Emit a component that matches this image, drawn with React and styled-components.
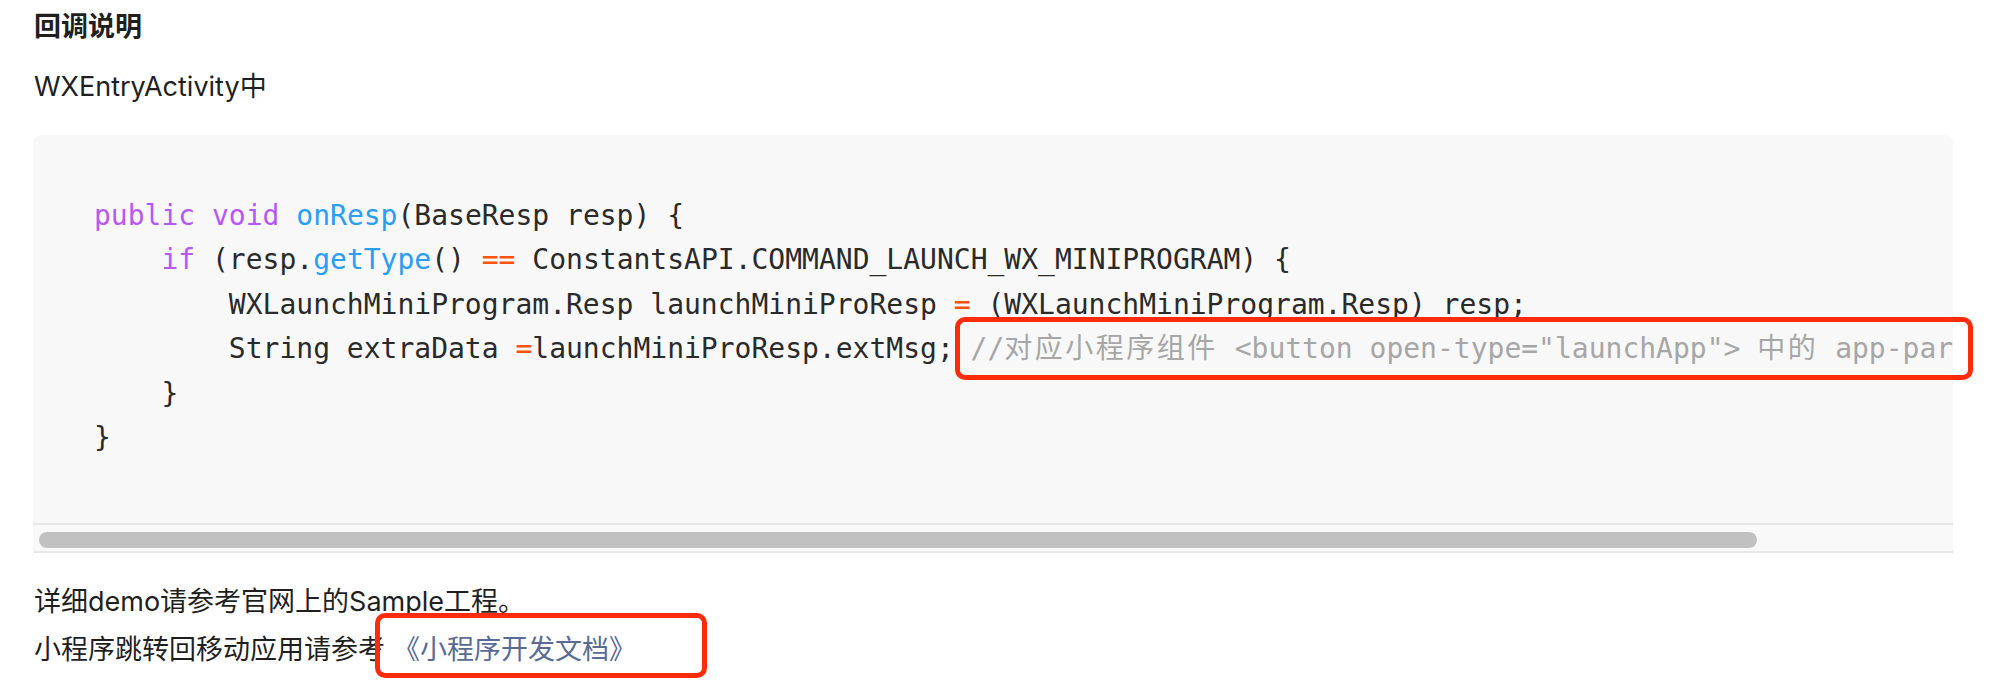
import styled, { createGlobalStyle } from "styled-components";

const GlobalStyle = createGlobalStyle`
  html, body {
    margin: 0;
    padding: 0;
    background: #ffffff;
  }
  * {
    box-sizing: border-box;
  }
`;

const Page = styled.div`
  position: relative;
  padding: 3px 39px 20px 34px;
  font-family: "Inter", "Noto Sans CJK SC", sans-serif;
  color: #1f1f1f;
`;

const Heading = styled.h4`
  margin: 0;
  font-size: 27px;
  line-height: 48px;
  font-weight: 700;
`;

const Para = styled.p`
  margin: ${(p) => p.$top || 0}px 0 0;
  font-size: 27px;
  line-height: ${(p) => p.$lh || 48}px;
`;

const Link = styled.a`
  color: #576b95;
  text-decoration: none;
  margin-left: 8px;
`;

const CodeBox = styled.div`
  margin: 24px 0 0 -1px;
  background: #f8f8f8;
  border-radius: 8px 8px 0 0;
  overflow: hidden;
`;

const Pre = styled.pre`
  margin: 0;
  padding: 14px 0 18px 61px;
  font-family: "DejaVu Sans Mono", "Noto Sans CJK SC", monospace;
  font-size: 28px;
  line-height: 44.5px;
  color: #2a2a2a;
  white-space: pre;
  overflow: hidden;
`;

const Token = styled.span`
  color: ${(p) =>
    p.$kind === "kw"
      ? "#b658f5"
      : p.$kind === "fn"
      ? "#2a9df4"
      : p.$kind === "op"
      ? "#ff5110"
      : p.$kind === "cm"
      ? "#a6a6a6"
      : "inherit"};
`;

// CJK glyphs in the comment run wider than the mono cell
const Wide = styled.span`
  letter-spacing: 2.5px;
`;

const ScrollTrack = styled.div`
  height: 30px;
  padding: 7px 0 0 6px;
  background: #f9f9f9;
  border-top: 2px solid #e7e7e7;
  border-bottom: 2px solid #e7e7e7;
`;

const Thumb = styled.div`
  width: ${(p) => p.$width}px;
  height: 16px;
  border-radius: 8px;
  background: #c1c1c1;
`;

const Mark = styled.div`
  position: absolute;
  left: ${(p) => p.$x}px;
  top: ${(p) => p.$y}px;
  width: ${(p) => p.$w}px;
  height: ${(p) => p.$h}px;
  border: 5px solid #fe2c0b;
  border-radius: 10px;
  pointer-events: none;
`;

function App() {
  return (
    <>
      <GlobalStyle />
      <Page>
        <Heading>回调说明</Heading>
        <Para $top={12}>WXEntryActivity中</Para>
        <CodeBox>
          <Pre>
            {"\n"}
            <Token $kind="kw">public</Token> <Token $kind="kw">void</Token>{" "}
            <Token $kind="fn">onResp</Token>(BaseResp resp) {"{"}
            {"\n    "}
            <Token $kind="kw">if</Token> (resp.<Token $kind="fn">getType</Token>(){" "}
            <Token $kind="op">==</Token> ConstantsAPI.COMMAND_LAUNCH_WX_MINIPROGRAM) {"{"}
            {"\n        "}WXLaunchMiniProgram.Resp launchMiniProResp{" "}
            <Token $kind="op">=</Token> (WXLaunchMiniProgram.Resp) resp;
            {"\n        "}String extraData <Token $kind="op">=</Token>
            launchMiniProResp.extMsg;{" "}
            <Token $kind="cm">
              //<Wide>对应小程序组件</Wide> {'<button open-type="launchApp">'}{" "}
              <Wide>中的</Wide> app-parameter属性
            </Token>
            {"\n    }"}
            {"\n}"}
            {"\n "}
          </Pre>
          <ScrollTrack>
            <Thumb $width={1718} />
          </ScrollTrack>
        </CodeBox>
        <Para $top={25}>
          详细demo请参考官网上的Sample工程。
          <br />
          小程序跳转回移动应用请参考<Link href="#">《小程序开发文档》</Link>
        </Para>
        <Mark $x={955} $y={317} $w={1018} $h={63} />
        <Mark $x={375} $y={613} $w={332} $h={65} />
      </Page>
    </>
  );
}

export default App;
